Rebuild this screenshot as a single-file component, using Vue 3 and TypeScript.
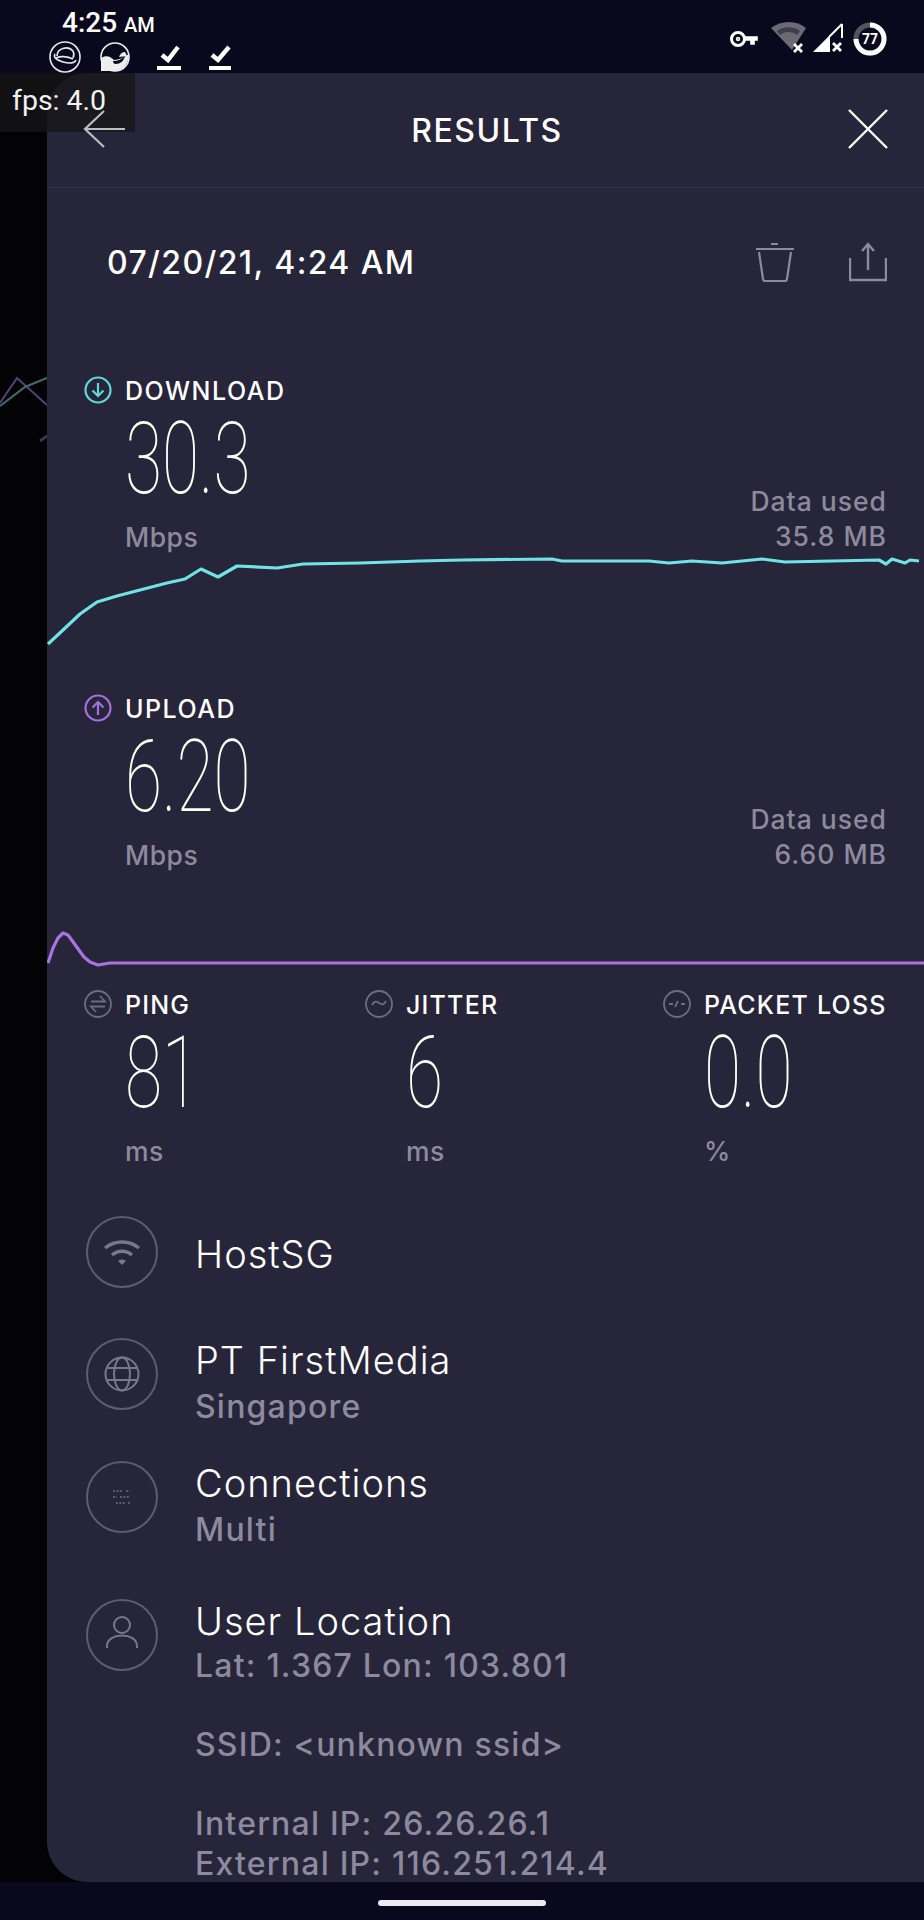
<script setup lang="ts">
interface Stat { label: string; value: string; unit: string; icon: string }
const stats: Stat[] = [
  { label: 'PING', value: '81', unit: 'ms', icon: 'ping' },
  { label: 'JITTER', value: '6', unit: 'ms', icon: 'jitter' },
  { label: 'PACKET LOSS', value: '0.0', unit: '%', icon: 'loss' },
]
const toPoints = (pts: number[][]) => pts.map(([x, y]) => `${x - 47},${y}`).join(' ')
const downloadLine = toPoints([
  [48,644],[63,630],[80,614],[97,602],[117,596],[140,590],[167,583],[185,579],[201,569],[218,577],[237,566],
  [277,568],[303,564],[360,563],[420,561],[462,560],[552,559],[562,561],[649,561],[669,563],[692,561],[722,563],
  [762,559],[785,562],[879,560],[886,564],[892,559],[905,563],[910,560],[919,561],
])
const uploadLine = toPoints([
  [48,963],[53,948],[58,938],[63,933],[68,935],[76,946],[84,957],[90,962],[98,965],[110,963],[924,963],
])
</script>

<template>
  <div class="page">
    <header class="status">
      <div class="status-left">
        <div class="clock">4:25 <small>AM</small></div>
        <div class="notifs">
          <svg width="34" height="32" viewBox="0 0 34 32" fill="none" stroke="#e8e8ee" stroke-width="1.6">
            <circle cx="17" cy="16" r="15" />
            <path d="M7 13c-2 3 1 6 8 8 7 2 12 1 13-2" />
            <path d="M9 15a9 8 0 0 1 16-5c1 2 1 5 0 7" />
            <path d="M8 17c4-2 11-2 17 1" />
          </svg>
          <svg class="gap-a" width="32" height="32" viewBox="0 0 32 32">
            <circle cx="16" cy="16" r="14" fill="none" stroke="#eee" stroke-width="1.6" />
            <path d="M2 17c5-3 9-2 13 2 5 0 10-3 15-6 0 9-6 17-15 17H2z" fill="#eee" />
            <path d="M14 20c5 0 9-2 12-5-1 5-5 8-9 8-2 0-3-1-3-3z" fill="#0a081d" />
            <path d="M20 16c1-3 3-5 6-5l2 4z" fill="#eee" />
          </svg>
          <svg class="gap-b" width="26" height="32" viewBox="0 0 26 32" fill="none" stroke="#fff">
            <path d="M6 14l6 5L22 6" stroke-width="4.4" />
            <path d="M1 27h24" stroke-width="4" />
          </svg>
          <svg class="gap-c" width="24" height="32" viewBox="0 0 24 32" fill="none" stroke="#fff">
            <path d="M4 14l6 5L21 6" stroke-width="4.4" />
            <path d="M1 27h22" stroke-width="4" />
          </svg>
        </div>
      </div>
      <div class="status-right">
        <svg width="30" height="20" viewBox="0 0 30 20" fill="none" stroke="#fff" stroke-width="3">
          <circle cx="9" cy="10" r="6.5" /><circle cx="9" cy="10" r="1.4" stroke-width="1.6" />
          <path d="M15 8h13v3h-3v4h-3v-4h-7" fill="#fff" stroke-width="1.6" />
        </svg>
        <svg width="36" height="32" viewBox="0 0 36 32">
          <path d="M0 6C10-2 26-2 35 6L21 28Z" fill="#6c6b74" />
          <path d="M6 9c7-5 16-5 23 0l-3 4c-5-4-12-4-17 0z" fill="#0a081d" opacity=".45" />
          <path d="M23 22l8 8M31 22l-8 8" stroke="#fff" stroke-width="2.8" />
        </svg>
        <svg width="32" height="32" viewBox="0 0 32 32">
          <path d="M29 2v14M29 2L16 15" stroke="#fff" stroke-width="2" fill="none" />
          <path d="M0 30L17 13v17z" fill="#fff" />
          <path d="M20 21l8 8M28 21l-8 8" stroke="#fff" stroke-width="2.8" />
        </svg>
        <div class="ring">
          <svg width="34" height="34" viewBox="0 0 34 34" fill="none" stroke-width="5">
            <circle cx="17" cy="17" r="14" stroke="#55545c" />
            <path d="M17 3a14 14 0 1 1-14 14" stroke="#fff" />
          </svg>
          <span>77</span>
        </div>
      </div>
    </header>

    <div class="middle">
      <aside class="behind">
        <svg width="47" height="100" viewBox="0 0 47 100" fill="none" stroke-width="2">
          <path d="M0 30L17 5L47 32" stroke="#5c3d80" />
          <path d="M0 33L25 14L47 5" stroke="#3f6f6a" />
          <path d="M40 68L47 63" stroke="#3a3a44" stroke-width="3" />
        </svg>
      </aside>

      <main class="panel">
        <div class="topbar">
          <svg class="back" width="43" height="40" viewBox="0 0 43 40" fill="none" stroke="#bdbcc4" stroke-width="2.2">
            <path d="M21 2L2 20l19 18M2 20h40" />
          </svg>
          <h1>RESULTS</h1>
          <svg width="40" height="40" viewBox="0 0 40 40" fill="none" stroke="#fff" stroke-width="2.4">
            <path d="M1 1l38 38M39 1L1 39" />
          </svg>
        </div>

        <div class="date-row">
          <span class="date">07/20/21, 4:24 AM</span>
          <div class="actions">
            <svg width="38" height="40" viewBox="0 0 38 40" fill="none" stroke="#8d8a9f" stroke-width="2.2">
              <path d="M0 7h38M15 2h7M3 10l4 27q.3 2 2 2h20q1.700 0 2-2l4-27" />
            </svg>
            <svg width="38" height="40" viewBox="0 0 38 40" fill="none" stroke="#8d8a9f" stroke-width="2.4">
              <path d="M19 28V2M13 9l6-7 6 7M1 16v22h36V16" />
            </svg>
          </div>
        </div>

        <section class="metric">
          <div class="metric-main">
            <div>
              <div class="metric-head">
                <svg class="badge" width="28" height="28" viewBox="0 0 28 28" fill="none" stroke="#5fd8d8" stroke-width="2.2">
                  <circle cx="14" cy="14" r="12.500" /><path d="M14 7v13M8.500 14.500L14 20l5.500-5.500" />
                </svg>
                <span>DOWNLOAD</span>
              </div>
              <div class="value">30.3</div>
              <div class="unit">Mbps</div>
            </div>
            <div class="used"><div>Data used</div><div>35.8 MB</div></div>
          </div>
          <svg class="chart down" width="877" height="142" viewBox="0 552 877 142" fill="none">
            <polyline :points="downloadLine" stroke="#6fe3e6" stroke-width="3.2" stroke-linejoin="round" />
          </svg>
        </section>

        <section class="metric">
          <div class="metric-main">
            <div>
              <div class="metric-head">
                <svg class="badge" width="28" height="28" viewBox="0 0 28 28" fill="none" stroke="#a56fdc" stroke-width="2.2">
                  <circle cx="14" cy="14" r="12.500" /><path d="M14 21V8M8.500 13.500L14 8l5.500 5.500" />
                </svg>
                <span>UPLOAD</span>
              </div>
              <div class="value">6.20</div>
              <div class="unit">Mbps</div>
            </div>
            <div class="used"><div>Data used</div><div>6.60 MB</div></div>
          </div>
          <svg class="chart up" width="877" height="120" viewBox="0 870 877 120" fill="none">
            <polyline :points="uploadLine" stroke="#a974e0" stroke-width="3.2" stroke-linejoin="round" />
          </svg>
        </section>

        <section class="stats">
          <div v-for="s in stats" :key="s.label" class="stat">
            <div class="metric-head">
              <svg class="badge" width="28" height="28" viewBox="0 0 28 28" fill="none" stroke="#6f6c80" stroke-width="1.800">
                <circle cx="14" cy="14" r="13" />
                <template v-if="s.icon === 'ping'">
                  <path d="M7 11.500h14L16 6M21 16.500H7l5 5.500" />
                </template>
                <path v-else-if="s.icon === 'jitter'" d="M7 15c2-4 4-4 7-2s5 2 7-2" />
                <path v-else d="M6 14h4M12 17l3-6M18 14h4" />
              </svg>
              <span>{{ s.label }}</span>
            </div>
            <div class="value">{{ s.value }}</div>
            <div class="unit">{{ s.unit }}</div>
          </div>
        </section>

        <section class="details">
          <div class="row row-host">
            <span class="disc">
              <svg width="38" height="30" viewBox="0 0 38 30" fill="none" stroke="#7a7789" stroke-width="3.400">
                <path d="M2 11c10-8 24-8 34 0M9 18c6-5 14-5 20 0" />
                <path d="M15 24c3-2 5-2 8 0l-4 4z" fill="#7a7789" stroke="none" />
              </svg>
            </span>
            <div class="copy solo"><div class="name">HostSG</div></div>
          </div>
          <div class="row row-net">
            <span class="disc">
              <svg width="36" height="36" viewBox="0 0 36 36" fill="none" stroke="#7a7789" stroke-width="2">
                <circle cx="18" cy="18" r="16.500" /><ellipse cx="18" cy="18" rx="8" ry="16.500" />
                <path d="M3 12h30M3 24h30" />
              </svg>
            </span>
            <div class="copy"><div class="name">PT FirstMedia</div><div class="sub">Singapore</div></div>
          </div>
          <div class="row row-conn">
            <span class="disc">
              <svg width="20" height="18" viewBox="0 0 20 18" fill="none" stroke="#6f6c80" stroke-width="1.400">
                <path d="M1 3h10M14 3h4M1 9h4M8 9h10M4 15h10M16 15h2" stroke-dasharray="2 1.400" />
              </svg>
            </span>
            <div class="copy"><div class="name">Connections</div><div class="sub">Multi</div></div>
          </div>
          <div class="row">
            <span class="disc">
              <svg width="32" height="38" viewBox="0 0 32 38" fill="none" stroke="#7a7789" stroke-width="2">
                <circle cx="16" cy="9" r="8" /><path d="M1 32v-2c0-14 30-14 30 0v2" />
              </svg>
            </span>
            <div class="copy user">
              <div class="name">User Location</div>
              <div class="sub">Lat: 1.367 Lon: 103.801</div>
              <div class="sub spaced">SSID: &lt;unknown ssid&gt;</div>
              <div class="sub spaced">Internal IP: 26.26.26.1</div>
              <div class="sub">External IP: 116.251.214.4</div>
            </div>
          </div>
        </section>
      </main>
    </div>

    <footer class="navbar"><span class="pill"></span></footer>
    <div class="fps">fps: 4.0</div>
  </div>
</template>

<style scoped>
.page {
  position: relative;
  width: 924px;
  height: 1920px;
  display: grid;
  grid-template-rows: 73px 1fr 38px;
  background: #0a081d;
  color: #fff;
  font-family: Inter, "Liberation Sans", sans-serif;
  overflow: hidden;
}
.status { display: flex; justify-content: space-between; padding-left: 48px; }
.status-right { display: flex; align-items: flex-start; gap: 6px; padding: 22px 37px 0 0; }
.status-right > svg:first-child { margin: 7px 6px 0 0; }
.clock { font: 500 28px/30px Roboto, sans-serif; padding: 8px 0 0 14px; height: 41px; box-sizing: border-box; white-space: nowrap; }
.clock small { font-size: 20px; }
.notifs { display: flex; height: 32px; align-items: center; }
.gap-a { margin-left: 17px; }
.gap-b { margin-left: 25px; }
.gap-c { margin-left: 26px; }
.ring { position: relative; width: 34px; height: 34px; margin-left: 2px; }
.ring svg { display: block; }
.ring span { position: absolute; inset: 0; display: grid; place-items: center; font: 700 14px Roboto, sans-serif; }

.middle { display: flex; background: #030305; min-height: 0; }
.behind { width: 47px; flex: none; padding-top: 300px; }
.behind svg { display: block; }
.panel {
  flex: 1;
  min-width: 0;
  background: #272539;
  border-radius: 40px 0 0 40px;
  overflow: hidden;
}
.topbar {
  height: 115px;
  box-sizing: border-box;
  display: flex;
  align-items: center;
  justify-content: space-between;
  padding: 0 36px 2px 36px;
  border-bottom: 1px solid #34324a;
}
.back { position: relative; z-index: 2; }
.topbar h1 { margin: 0; font-size: 32px; font-weight: 500; letter-spacing: 1.500px; line-height: 1; padding-top: 3px; }
.date-row {
  height: 148px;
  box-sizing: border-box;
  display: flex;
  align-items: center;
  justify-content: space-between;
  padding: 0 37px 0 60px;
}
.date { font-size: 32px; font-weight: 500; letter-spacing: 1.400px; }
.actions { display: flex; gap: 55px; }
.date-row + .metric { padding-top: 40px; }
.metric-main { display: flex; justify-content: space-between; align-items: flex-end; padding: 0 37px; }
.metric-head { display: flex; align-items: center; gap: 14px; height: 28px; margin-left: -1px; font-size: 25px; font-weight: 500; letter-spacing: 1.500px; white-space: nowrap; }
.metric-head span { position: relative; top: 1px; }
.badge { flex: none; position: relative; left: 1px; }
.value {
  height: 118px;
  padding-left: 41px;
  font: 100 101px/110px Roboto, sans-serif;
  transform: scaleX(.67);
  transform-origin: 41px 0;
  white-space: nowrap;
}
.unit { height: 30px; padding-left: 41px; font-size: 26.500px; line-height: 30px; font-weight: 500; letter-spacing: .5px; color: #8d8a9f; }
.used { text-align: right; font-size: 26.500px; font-weight: 500; line-height: 35px; letter-spacing: 1px; color: #8d8a9f; margin-bottom: -2px; }
.chart { display: block; }
.stats { display: grid; grid-template-columns: 281px 298px 1fr; padding-left: 37px; }
.stats .metric-head { letter-spacing: 1.200px; }
.details { padding: 50px 0 0 39px; }
.row { display: flex; gap: 37px; }
.row-host { height: 122px; }
.row-net { height: 122px; }
.row-conn { height: 138px; margin-top: 1px; }
.disc {
  flex: none;
  width: 72px;
  height: 72px;
  box-sizing: border-box;
  border: 2px solid #5f5c70;
  border-radius: 50%;
  display: grid;
  place-items: center;
}
.copy { padding-top: 2px; }
.copy.solo { padding-top: 18px; }
.name { font-size: 38px; font-weight: 300; line-height: 40px; letter-spacing: 1px; white-space: nowrap; }
.sub { margin-top: 12px; font-size: 32px; line-height: 30px; font-weight: 500; letter-spacing: 1.200px; color: #8d8a9f; white-space: nowrap; }
.user { padding-top: 2px; }
.user .sub { margin-top: 10px; }
.user .spaced { margin-top: 49px; }
.navbar { display: flex; justify-content: center; padding-top: 18px; }
.pill { display: block; width: 168px; height: 6px; border-radius: 3px; background: #eceaf0; }
.fps {
  position: absolute;
  left: 0;
  top: 73px;
  width: 135px;
  height: 59px;
  padding: 13px 0 0 12px;
  box-sizing: border-box;
  background: rgba(22, 22, 24, .78);
  font: 400 28.500px/30px Roboto, sans-serif;
  color: #f2f2f2;
}
</style>
